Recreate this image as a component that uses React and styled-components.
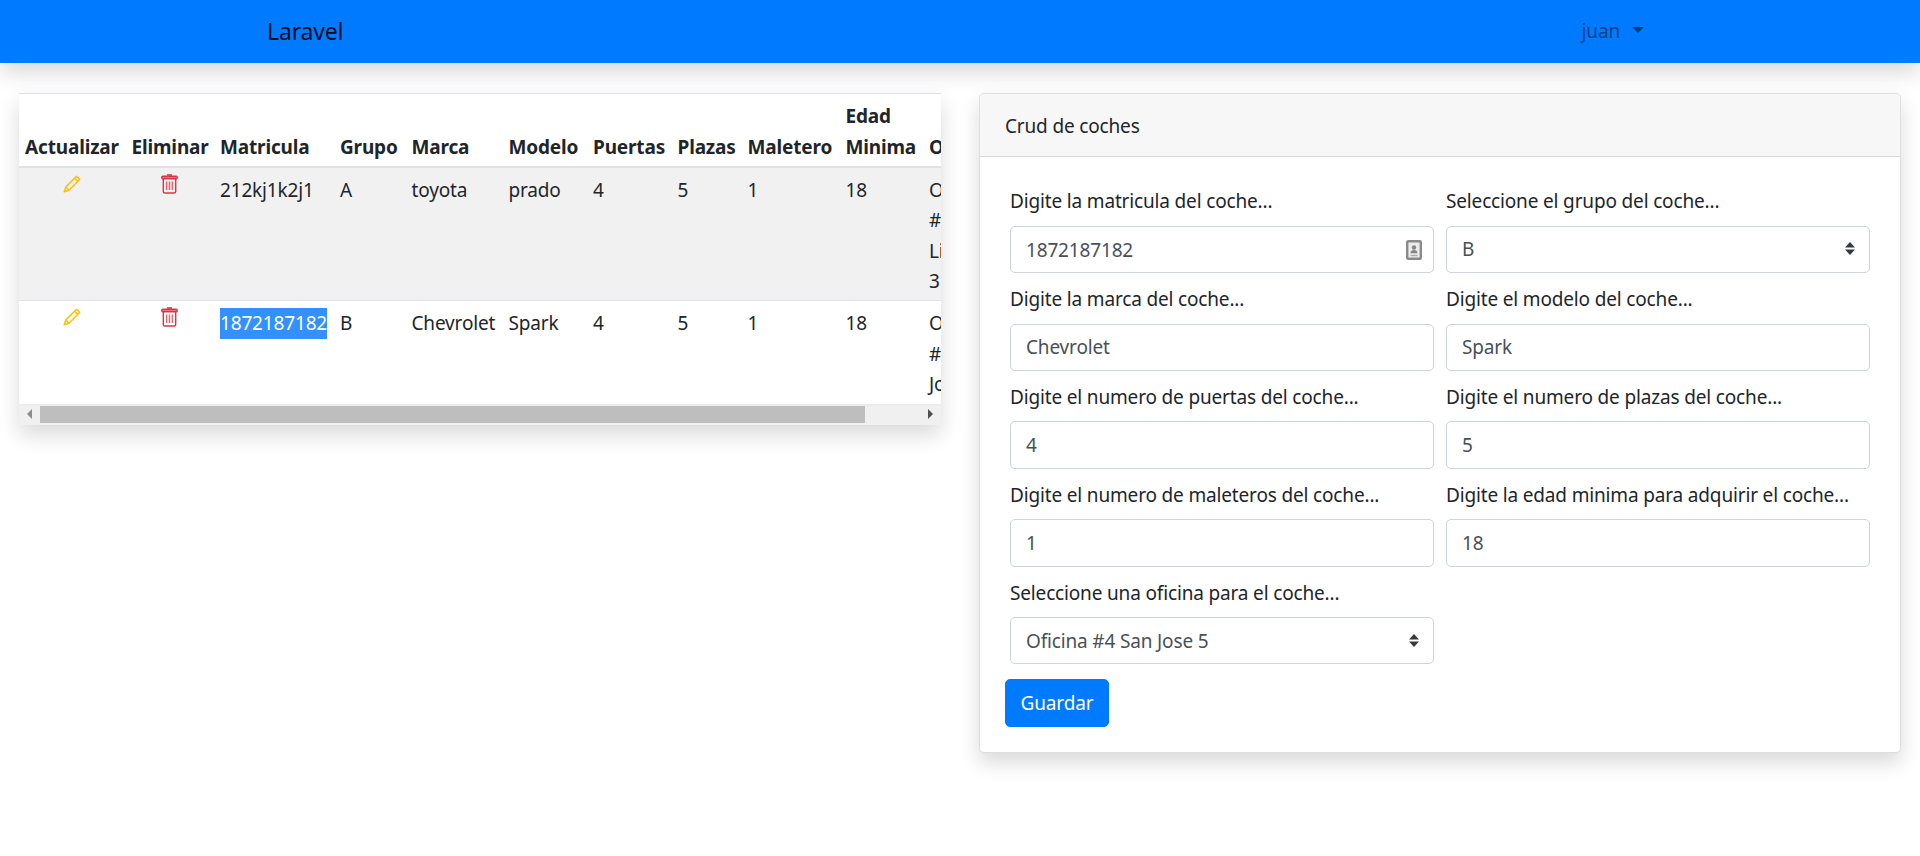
import { createGlobalStyle } from "styled-components"
import styled from "styled-components"

const GlobalStyle = createGlobalStyle`
    html, body { margin: 0; background: #fff; }
    body {
        font-family: "Noto Sans", "Open Sans", sans-serif;
        font-size: 19px;
        line-height: 30.4px;
        letter-spacing: -0.16px;
        color: #212529;
    }
`

const columns = [106.5, 88.5, 120, 71.5, 97, 84.5, 84.5, 70, 98, 83.5, 74]
const headers = ["Actualizar", "Eliminar", "Matricula", "Grupo", "Marca", "Modelo", "Puertas", "Plazas", "Maletero", "Edad Minima", "Oficina"]

const cars = [
    { matricula: "212kj1k2j1", grupo: "A", marca: "toyota", modelo: "prado", puertas: 4, plazas: 5, maletero: 1, edad: 18, oficina: "Oficina #1 Liberia 3" },
    { matricula: "1872187182", grupo: "B", marca: "Chevrolet", modelo: "Spark", puertas: 4, plazas: 5, maletero: 1, edad: 18, oficina: "Oficina #4 Jose 5", selected: true },
]

function PencilIcon() {
    return (
        <svg width="18" height="18" viewBox="0 0 18 18" fill="none" stroke="#ffc107" strokeWidth="1.5" strokeLinejoin="round">
            <path d="M13.6 1.200 16.800 4.200 6 15.200 1.200 16.800 2.800 11.900Z" />
            <path d="M11.600 3.200 14.800 6.300" />
            <path d="M2.800 11.900 6 15.200" />
        </svg>
    )
}

function TrashIcon() {
    return (
        <TrashSvg width="17" height="20" viewBox="0 0 17 20" fill="none" stroke="#dc3545" strokeWidth="1.4">
            <path d="M6 1h5" strokeWidth="1.6" />
            <rect x="0.8" y="2.2" width="15.4" height="2.6" rx="1" fill="#e9737f" />
            <path d="M2.300 5v12.400c0 .9.6 1.600 1.500 1.600h9.400c.9 0 1.500-.7 1.500-1.600V5" />
            <path d="M5.600 7.500v8.500M8.500 7.500v8.500M11.400 7.500v8.500" strokeWidth="1.5" opacity="0.75" />
        </TrashSvg>
    )
}

function ContactIcon() {
    return (
        <svg width="16" height="20" viewBox="0 0 16 20">
            <rect x="1.200" y="1.200" width="13.600" height="17.600" rx="1" fill="#ececec" stroke="#8a8a8a" strokeWidth="2.400" />
            <circle cx="8" cy="7.500" r="2.200" fill="#858585" />
            <path d="M4.500 13.200c0-2 1.500-3.200 3.500-3.200s3.500 1.200 3.500 3.200Z" fill="#858585" />
            <path d="M4.500 15.500h7" stroke="#adadad" strokeWidth="1.400" />
        </svg>
    )
}

function Field({ label, value, contact }) {
    return (
        <FieldBox>
            <Label>{label}</Label>
            <InputWrap>
                <Input defaultValue={value} />
                {contact && <InputIcon><ContactIcon /></InputIcon>}
            </InputWrap>
        </FieldBox>
    )
}

function SelectField({ label, value }) {
    return (
        <FieldBox>
            <Label>{label}</Label>
            <InputWrap>
                <Select defaultValue={value}>
                    <option>{value}</option>
                </Select>
                <SelectArrows viewBox="0 0 4 5" preserveAspectRatio="none">
                    <path d="M2 0 0 2.100h4zM2 5 0 2.900h4z" fill="#343a40" />
                </SelectArrows>
            </InputWrap>
        </FieldBox>
    )
}

export default function App() {
    return (
        <>
            <GlobalStyle />
            <Navbar>
                <Brand>Laravel</Brand>
                <UserMenu>juan<Caret /></UserMenu>
            </Navbar>
            <Page>
                <TableCard>
                    <TableScroll>
                        <Table>
                            <colgroup>
                                {columns.map((w, i) => <col key={i} style={{ width: w }} />)}
                            </colgroup>
                            <thead>
                                <tr>
                                    {headers.map((h) => <Th key={h}>{h}</Th>)}
                                </tr>
                            </thead>
                            <tbody>
                                {cars.map((car, i) => (
                                    <Row key={car.matricula} $striped={i % 2 === 0}>
                                        <IconCell><PencilIcon /></IconCell>
                                        <IconCell><TrashIcon /></IconCell>
                                        <Td>{car.selected ? <Selected>{car.matricula}</Selected> : car.matricula}</Td>
                                        <Td>{car.grupo}</Td>
                                        <Td>{car.marca}</Td>
                                        <Td>{car.modelo}</Td>
                                        <Td>{car.puertas}</Td>
                                        <Td>{car.plazas}</Td>
                                        <Td>{car.maletero}</Td>
                                        <Td>{car.edad}</Td>
                                        <Td>{car.oficina}</Td>
                                    </Row>
                                ))}
                            </tbody>
                        </Table>
                    </TableScroll>
                    <ScrollBar>
                        <ScrollArrow><ArrowLeft /></ScrollArrow>
                        <ScrollTrack><ScrollThumb /></ScrollTrack>
                        <ScrollArrow><ArrowRight /></ScrollArrow>
                    </ScrollBar>
                </TableCard>
                <FormCard>
                    <CardHeader>Crud de coches</CardHeader>
                    <CardBody>
                        <FormGrid>
                            <Field label="Digite la matricula del coche..." value="1872187182" contact />
                            <SelectField label="Seleccione el grupo del coche..." value="B" />
                            <Field label="Digite la marca del coche..." value="Chevrolet" />
                            <Field label="Digite el modelo del coche..." value="Spark" />
                            <Field label="Digite el numero de puertas del coche..." value="4" />
                            <Field label="Digite el numero de plazas del coche..." value="5" />
                            <Field label="Digite el numero de maleteros del coche..." value="1" />
                            <Field label="Digite la edad minima para adquirir el coche..." value="18" />
                            <SelectField label="Seleccione una oficina para el coche..." value="Oficina #4 San Jose 5" />
                        </FormGrid>
                        <SaveButton>Guardar</SaveButton>
                    </CardBody>
                </FormCard>
            </Page>
        </>
    )
}

const TrashSvg = styled.svg`
    margin-top: -1px;
`

const Navbar = styled.nav`
    height: 63px;
    background: #007bff;
    display: flex;
    align-items: center;
    justify-content: space-between;
    padding: 0 276px 0 267px;
    box-shadow: 0 10px 20px rgba(0, 0, 0, 0.15);
`

const Brand = styled.a`
    font-size: 23px;
    color: rgba(0, 0, 0, 0.9);
`

const UserMenu = styled.a`
    display: flex;
    align-items: center;
    color: rgba(0, 0, 0, 0.5);
`

const Caret = styled.span`
    margin-left: 12px;
    margin-bottom: 4px;
    border-top: 6px solid rgba(0, 0, 0, 0.5);
    border-left: 6px solid transparent;
    border-right: 6px solid transparent;
`

const Page = styled.main`
    display: grid;
    grid-template-columns: 922px 922px;
    justify-content: space-between;
    align-items: start;
    padding: 30px 19px 60px;
`

const TableCard = styled.section`
    background: #fff;
    box-shadow: 0 10px 20px rgba(0, 0, 0, 0.15);
`

const TableScroll = styled.div`
    overflow: hidden;
`

const Table = styled.table`
    width: 978px;
    table-layout: fixed;
    border-collapse: collapse;
    tbody tr + tr td {
        border-top: 1px solid #dee2e6;
    }
`

const Th = styled.th`
    padding: 7.2px 6px 3.8px;
    text-align: left;
    vertical-align: bottom;
    font-weight: 700;
    border-top: 1px solid #dee2e6;
    border-bottom: 2px solid #dee2e6;
`

const Row = styled.tr`
    background: ${(props) => (props.$striped ? "#f1f1f1" : "#fff")};
`

const Td = styled.td`
    padding: 7px 6px 4px;
    vertical-align: top;
`

const IconCell = styled(Td)`
    text-align: center;
    line-height: 0;
`

const Selected = styled.span`
    display: inline-block;
    background: #3390ff;
    color: #fff;
`

const ScrollBar = styled.div`
    display: flex;
    height: 21px;
    background: #f0f0f0;
    border-top: 2px solid #ececec;
    border-bottom: 2px solid #f0f0f0;
    box-sizing: border-box;
`

const ScrollArrow = styled.div`
    width: 21px;
    display: flex;
    align-items: center;
    justify-content: center;
`

const ArrowLeft = styled.span`
    border-right: 5px solid #8c8c8c;
    border-top: 5px solid transparent;
    border-bottom: 5px solid transparent;
`

const ArrowRight = styled.span`
    border-left: 5px solid #505050;
    border-top: 5px solid transparent;
    border-bottom: 5px solid transparent;
`

const ScrollTrack = styled.div`
    flex: 1;
`

const ScrollThumb = styled.div`
    width: 825px;
    height: 100%;
    background: #bebebe;
`

const FormCard = styled.section`
    background: #fff;
    border: 1px solid rgba(0, 0, 0, 0.125);
    border-radius: 5px;
    box-shadow: 0 10px 20px rgba(0, 0, 0, 0.15);
`

const CardHeader = styled.header`
    padding: 16.5px 25px 15px;
    background: #f7f7f7;
    border-bottom: 1px solid rgba(0, 0, 0, 0.125);
    border-radius: 4px 4px 0 0;
`

const CardBody = styled.div`
    padding: 28.5px 25px 25px;
`

const FormGrid = styled.div`
    display: grid;
    grid-template-columns: 1fr 1fr;
    column-gap: 12px;
    padding: 0 5px;
`

const FieldBox = styled.div`
    margin-bottom: 10px;
`

const Label = styled.label`
    display: block;
    padding-top: 1px;
    margin-bottom: 9px;
`

const InputWrap = styled.div`
    position: relative;
`

const Input = styled.input`
    display: block;
    width: 100%;
    height: 47.4px;
    box-sizing: border-box;
    padding: 7.5px 15px;
    font: inherit;
    letter-spacing: inherit;
    color: #495057;
    background: #fff;
    border: 1px solid #ced4da;
    border-radius: 5px;
    outline: none;
`

const Select = styled.select`
    display: block;
    width: 100%;
    height: 47.4px;
    box-sizing: border-box;
    padding: 7.5px 30px 7.5px 15px;
    font: inherit;
    letter-spacing: inherit;
    color: #495057;
    background: #fff;
    border: 1px solid #ced4da;
    border-radius: 5px;
    outline: none;
    appearance: none;
`

const SelectArrows = styled.svg`
    position: absolute;
    top: 16.5px;
    right: 15px;
    width: 10px;
    height: 13px;
    pointer-events: none;
`

const InputIcon = styled.span`
    position: absolute;
    top: 14px;
    right: 12px;
    line-height: 0;
`

const SaveButton = styled.button`
    display: block;
    height: 48px;
    width: 104px;
    margin-top: 4.5px;
    font: inherit;
    letter-spacing: inherit;
    color: #fff;
    background: #007bff;
    border: 1px solid #007bff;
    border-radius: 5px;
`
